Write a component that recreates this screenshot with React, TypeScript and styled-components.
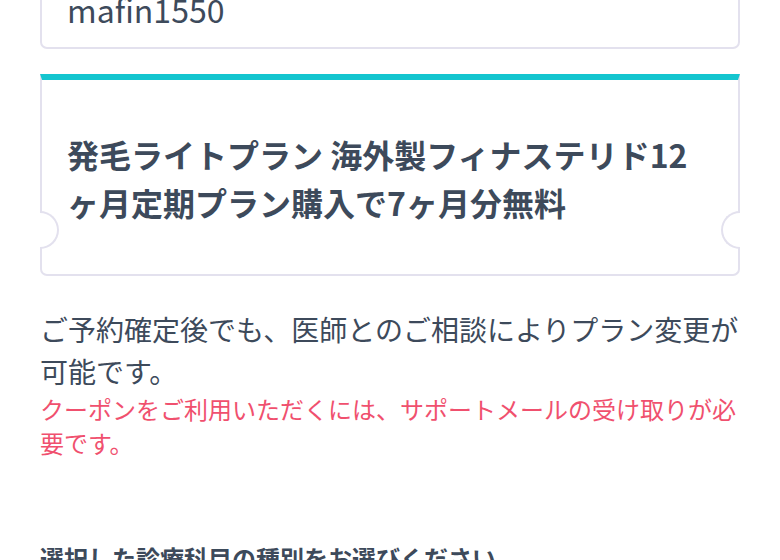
import React from "react";
import styled, { createGlobalStyle } from "styled-components";

const Global = createGlobalStyle`
  html, body { margin: 0; padding: 0; background: #ffffff; }
  body { font-family: "Noto Sans CJK JP", "Noto Sans", sans-serif; color: #3d4a5b; overflow: hidden; }
  * { box-sizing: border-box; }
`;

const Page = styled.div`
  padding: 0 40px;
  margin-top: -32px;
  display: flex;
  flex-direction: column;
`;

const InputBox = styled.div`
  height: 81px;
  border: 2px solid #e3e1ee;
  border-radius: 7px;
  padding: 0 25px;
  display: flex;
  align-items: center;
  font-size: 32px;
  color: #3d4a5b;
  line-height: 1;
`;

const Coupon = styled.div`
  position: relative;
  margin-top: 25px;
  border: 2px solid #e3e1ee;
  border-top: 6px solid #14c5cf;
  border-radius: 0 0 7px 7px;
  padding: 50px 24px 48px 25px;
`;

const CouponTitle = styled.div`
  font-size: 32px;
  font-weight: 700;
  line-height: 48px;
  color: #3d4a5b;
  line-break: loose;
`;

const Notch = styled.span<{ $side: "left" | "right" }>`
  position: absolute;
  bottom: 25px;
  width: 19px;
  height: 38px;
  background: #ffffff;
  border: 2px solid #e3e1ee;
  ${(p) =>
    p.$side === "left"
      ? "left: -2px; border-left: none; border-radius: 0 19px 19px 0;"
      : "right: -2px; border-right: none; border-radius: 19px 0 0 19px;"}
`;

const Note = styled.p`
  margin: 32px 0 0;
  font-size: 28px;
  line-height: 42px;
  color: #3d4a5b;
`;

const Warning = styled.p`
  margin: 0;
  font-size: 24px;
  line-height: 34px;
  color: #f0506e;
`;

const SectionHeading = styled.h3`
  margin: 80px 0 0;
  font-size: 24px;
  line-height: 36px;
  font-weight: 700;
  color: #3d4a5b;
`;

export default function App() {
  return (
    <>
      <Global />
      <Page>
        <InputBox>mafin1550</InputBox>
        <Coupon>
          <CouponTitle>発毛ライトプラン 海外製フィナステリド12ヶ月定期プラン購入で7ヶ月分無料</CouponTitle>
          <Notch $side="left" />
          <Notch $side="right" />
        </Coupon>
        <Note>ご予約確定後でも、医師とのご相談によりプラン変更が可能です。</Note>
        <Warning>クーポンをご利用いただくには、サポートメールの受け取りが必要です。</Warning>
        <SectionHeading>選択した診療科目の種別をお選びください</SectionHeading>
      </Page>
    </>
  );
}
